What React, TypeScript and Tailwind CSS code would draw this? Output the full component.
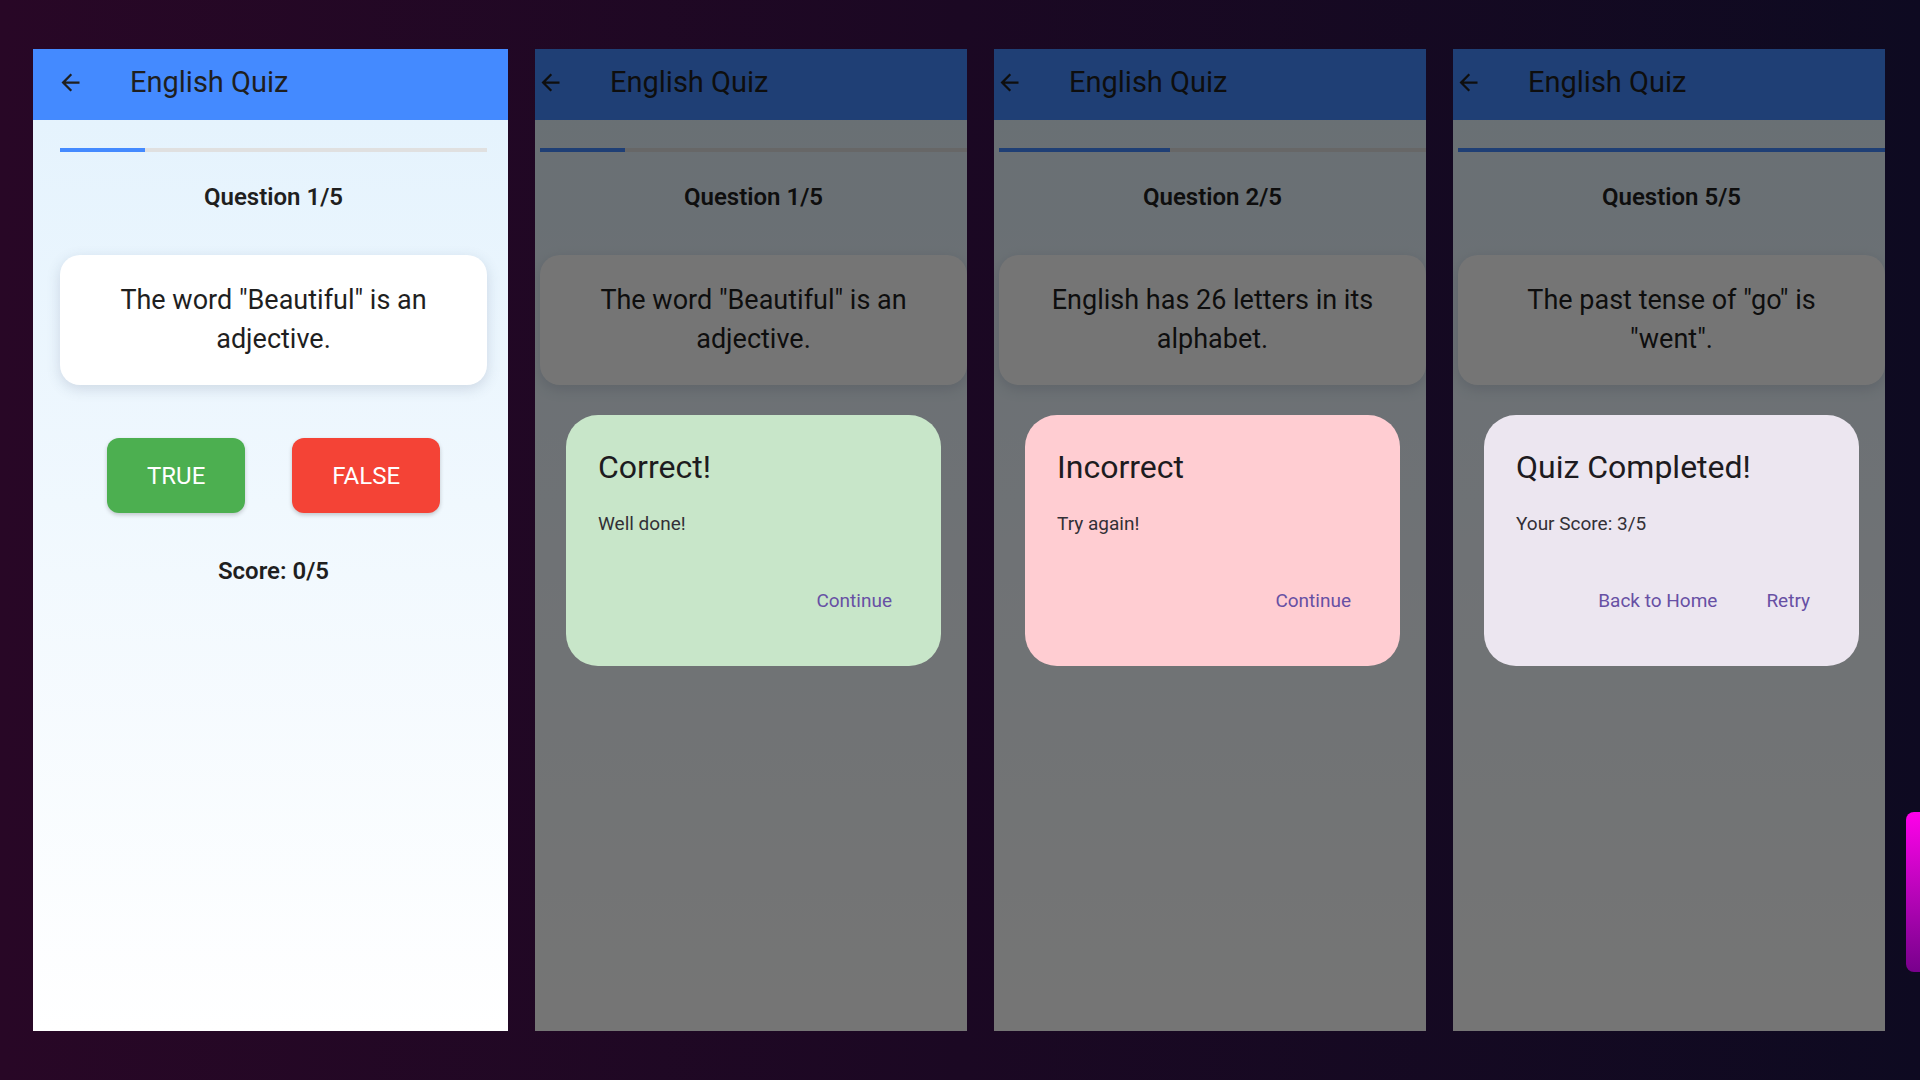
type QuizScreenProps = {
  question: number;
  text: string;
  progress: number;
  showButtons?: boolean;
};

const BackArrow = () => (
  <svg viewBox="0 0 24 24" className="h-[27px] w-[27px] fill-[#1f1f1f]">
    <path d="M20 11H7.83l5.59-5.59L12 4l-8 8 8 8 1.41-1.41L7.83 13H20v-2z" />
  </svg>
);

const QuizScreen = ({ question, text, progress, showButtons = true }: QuizScreenProps) => {
  return (
    <div className="flex h-full w-[475px] shrink-0 flex-col bg-gradient-to-b from-[#e3f2fd] to-white">
      <header className="flex h-[71px] shrink-0 items-center bg-[#448aff] pb-[4px] pl-[24px]">
        <BackArrow />
        <h1 className="ml-[46px] text-[29px] leading-none text-[#1f1f1f]">English Quiz</h1>
      </header>

      <div className="flex flex-col pl-[27px] pr-[21px]">
        <div className="mt-[28px] h-[4px] w-full bg-[#e0e0e0]">
          <div className="h-full bg-[#448aff]" style={{ width: `${progress}%` }} />
        </div>

        <p className="mt-[29px] text-center text-[24px] font-semibold leading-[32px] text-[#1f1f1f]">
          Question {question}/5
        </p>

        <div className="mt-[42px] rounded-[20px] bg-white px-[32px] py-[26px] text-center text-[27px] leading-[39px] text-[#1f1f1f] shadow-[0_4px_14px_rgba(60,80,110,0.18)]">
          {text}
        </div>

        {showButtons && (
          <>
            <div className="mt-[53px] flex justify-center gap-[47px]">
              <button
                type="button"
                className="h-[75px] rounded-[12px] bg-[#4caf50] px-[40px] text-[24px] text-white shadow-[0_2px_4px_rgba(0,0,0,0.2)]"
              >
                TRUE
              </button>
              <button
                type="button"
                className="h-[75px] rounded-[12px] bg-[#f44336] px-[40px] text-[24px] text-white shadow-[0_2px_4px_rgba(0,0,0,0.2)]"
              >
                FALSE
              </button>
            </div>
            <p className="mt-[42px] text-center text-[24px] font-semibold leading-[32px] text-[#1f1f1f]">
              Score: 0/5
            </p>
          </>
        )}
      </div>
    </div>
  );
};

type DialogPanelProps = QuizScreenProps & {
  title: string;
  body: string;
  color: string;
  actions: string[];
};

const DialogPanel = ({ title, body, color, actions, ...screen }: DialogPanelProps) => {
  return (
    <div className="relative h-full w-[432px] shrink-0 overflow-hidden">
      <div className="ml-[-22px] h-full">
        <QuizScreen {...screen} showButtons={false} />
      </div>

      <div className="absolute inset-0 flex items-center bg-black/[0.54]">
        <div className={`ml-[31px] h-[251px] w-[375px] rounded-[32px] pl-[32px] pr-[49px] pt-[32px] ${color}`}>
          <h2 className="text-[32px] leading-[40px] text-[#1d1b20]">{title}</h2>
          <p className="mt-[24px] text-[19px] leading-[26px] text-[#333036]">{body}</p>
          <div className="mt-[51px] flex justify-end gap-[49px]">
            {actions.map((action) => (
              <button
                key={action}
                type="button"
                className="text-[19px] leading-[26px] text-[#6750a4]"
              >
                {action}
              </button>
            ))}
          </div>
        </div>
      </div>
    </div>
  );
};

export default function App() {
  return (
    <div className="relative h-[1080px] w-full overflow-hidden bg-gradient-to-r from-[#280726] via-[#1b0823] to-[#0e0a21] font-['Roboto',sans-serif]">
      <div className="flex h-[1031px] gap-[27px] pl-[33px] pt-[49px]">
        <QuizScreen question={1} text={'The word "Beautiful" is an adjective.'} progress={20} />
        <DialogPanel
          question={1}
          text={'The word "Beautiful" is an adjective.'}
          progress={20}
          title="Correct!"
          body="Well done!"
          color="bg-[#c8e6c9]"
          actions={['Continue']}
        />
        <DialogPanel
          question={2}
          text="English has 26 letters in its alphabet."
          progress={40}
          title="Incorrect"
          body="Try again!"
          color="bg-[#ffcdd2]"
          actions={['Continue']}
        />
        <DialogPanel
          question={5}
          text={'The past tense of "go" is "went".'}
          progress={100}
          title="Quiz Completed!"
          body="Your Score: 3/5"
          color="bg-[#ece6f0]"
          actions={['Back to Home', 'Retry']}
        />
      </div>

      <div className="absolute right-0 top-[812px] h-[160px] w-[14px] rounded-l-[8px] bg-gradient-to-b from-[#ff00ea] to-[#78008c]" />
    </div>
  );
}
